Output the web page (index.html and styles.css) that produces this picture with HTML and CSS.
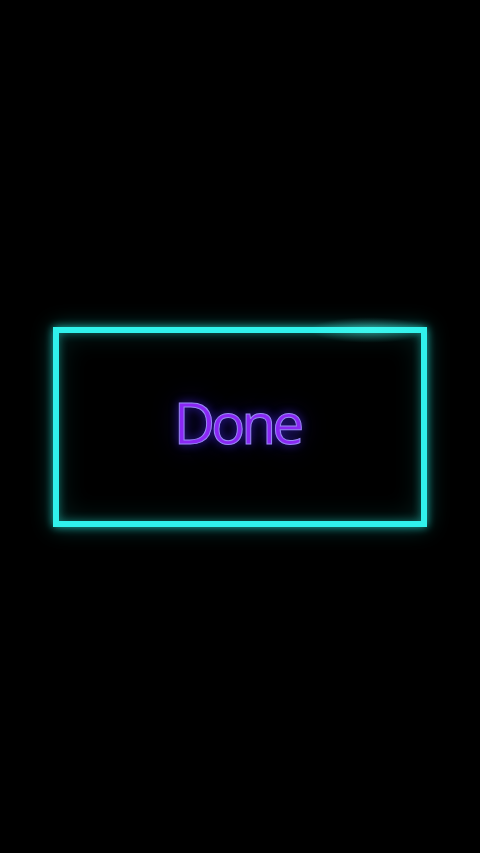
FILE: index.html
```html
<!DOCTYPE html>
<html lang="en">
<head>
  <meta charset="UTF-8" />
  <meta name="viewport" content="width=device-width, initial-scale=1.0"/>
  <title>Done</title>
  <link rel="stylesheet" href="styles.css">
</head>
<body>
  <div class="stage">
    <div class="neon-box">
      <span class="shine"></span>
      <div class="label">Done</div>
    </div>
  </div>
</body>
</html>
```

FILE: styles.css
```css
body {
  margin: 0;
  padding: 0;
  background-color: #000;
  font-family: "Open Sans", "DejaVu Sans", sans-serif;
}

.stage {
  height: 853px;
  display: flex;
  align-items: center;
  justify-content: center;
}

.neon-box {
  position: relative;
  width: 374px;
  height: 200px;
  box-sizing: border-box;
  border: 6px solid #30f2ec;
  box-shadow: 0 0 8px rgba(40, 230, 220, 0.7), 0 0 20px rgba(30, 200, 190, 0.35),
    inset 0 0 10px rgba(40, 230, 220, 0.45), inset 0 0 28px rgba(30, 190, 180, 0.18);
  display: flex;
  align-items: center;
  justify-content: center;
}

/* brighter streak on the top edge */
.shine {
  position: absolute;
  top: -16px;
  left: 250px;
  width: 120px;
  height: 26px;
  background: radial-gradient(ellipse at center, rgba(90, 255, 240, 0.35), rgba(0, 0, 0, 0) 70%);
}

.label {
  font-size: 57px;
  font-weight: 500;
  letter-spacing: -4px;
  color: #8a28f4;
  -webkit-text-stroke: 1px #9888f4;
  text-shadow: 0 0 10px rgba(70, 40, 230, 0.8), 0 0 26px rgba(40, 30, 170, 0.6);
  margin-top: -9px;
  margin-left: -6px;
}
```
